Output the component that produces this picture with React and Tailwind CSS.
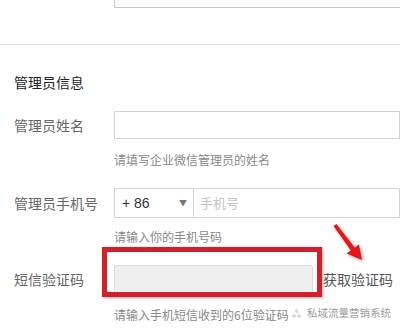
export default function App() {
  const font = "font-['Microsoft_YaHei','Noto_Sans_CJK_SC',sans-serif]";
  return (
    <div className={`relative w-[400px] h-[330px] overflow-hidden bg-white ${font}`}>
      <div className="ml-[114px] h-[8px] w-[300px] border-x border-b border-[#c8c8c8] bg-[#fafafa]" />
      <div className="mt-[36px] border-t border-[#e3e3e3]" />
      <div className="mt-[27px] pl-[14px] text-[14px] leading-[20px] text-[#222]">管理员信息</div>

      <div className="mt-[19px] flex h-[28px] items-center">
        <div className="w-[114px] pl-[14px] text-[14px] text-[#666]">管理员姓名</div>
        <div className="h-full flex-1 border border-[#d4d4d4] bg-white" />
      </div>
      <div className="mt-[12px] pl-[114px] text-[12px] leading-[18px] text-[#888]">请填写企业微信管理员的姓名</div>

      <div className="mt-[19px] flex h-[30px] items-center">
        <div className="w-[114px] pl-[14px] text-[14px] text-[#666]">管理员手机号</div>
        <div className="flex h-full flex-1 border border-[#d4d4d4]">
          <div className="flex w-[79px] items-center justify-between border-r border-[#d4d4d4] pl-[7px] pr-[6px]">
            <span className="font-['Liberation_Sans',sans-serif] text-[14px] text-[#333]">+ 86</span>
            <span className="text-[8px] text-[#777]">▼</span>
          </div>
          <div className="flex items-center pl-[6px] text-[13px] text-[#c4c4c4]">手机号</div>
        </div>
      </div>
      <div className="mt-[10px] pl-[114px] text-[12px] leading-[18px] text-[#888]">请输入你的手机号码</div>

      <div className="mt-[19px] flex h-[28px] items-center">
        <div className="w-[114px] pl-[14px] text-[14px] text-[#666]">短信验证码</div>
        <div className="h-full w-[199px] rounded-[2px] border border-[#dcdcdc] bg-[#eeeeee]" />
        <div className="ml-[10px] text-[14px] text-[#555]">获取验证码</div>
      </div>
      <div className="mt-[13px] pl-[114px] text-[12px] leading-[18px] text-[#888]">请输入手机短信收到的6位验证码</div>

      <div className="absolute left-[102px] top-[247px] h-[50px] w-[220px] border-[5px] border-[#d21f2b] shadow-[1px_1px_3px_rgba(120,0,0,0.35)]" />

      <svg className="absolute left-[325px] top-[215px]" width="50" height="55" viewBox="0 0 50 55">
        <defs>
          <filter id="sh" x="-30%" y="-30%" width="160%" height="160%">
            <feDropShadow dx="1.5" dy="1.5" stdDeviation="1.5" floodColor="#700" floodOpacity="0.35" />
          </filter>
        </defs>
        <g filter="url(#sh)" fill="#e8141c">
          <polygon points="8.5,11 11.5,9 30.5,33.5 26.5,36.5" />
          <polygon points="37,45 21.5,38.5 34,29.5" />
        </g>
      </svg>

      <div className="absolute left-[291px] top-[305px] flex items-center gap-[5px]">
        <span className="text-[11px] text-[#b5b5b5]">⁂</span>
        <span className="text-[10.5px] text-[#9a9a9a] [text-shadow:0_0_2px_#fff]">私域流量营销系统</span>
      </div>
    </div>
  );
}
